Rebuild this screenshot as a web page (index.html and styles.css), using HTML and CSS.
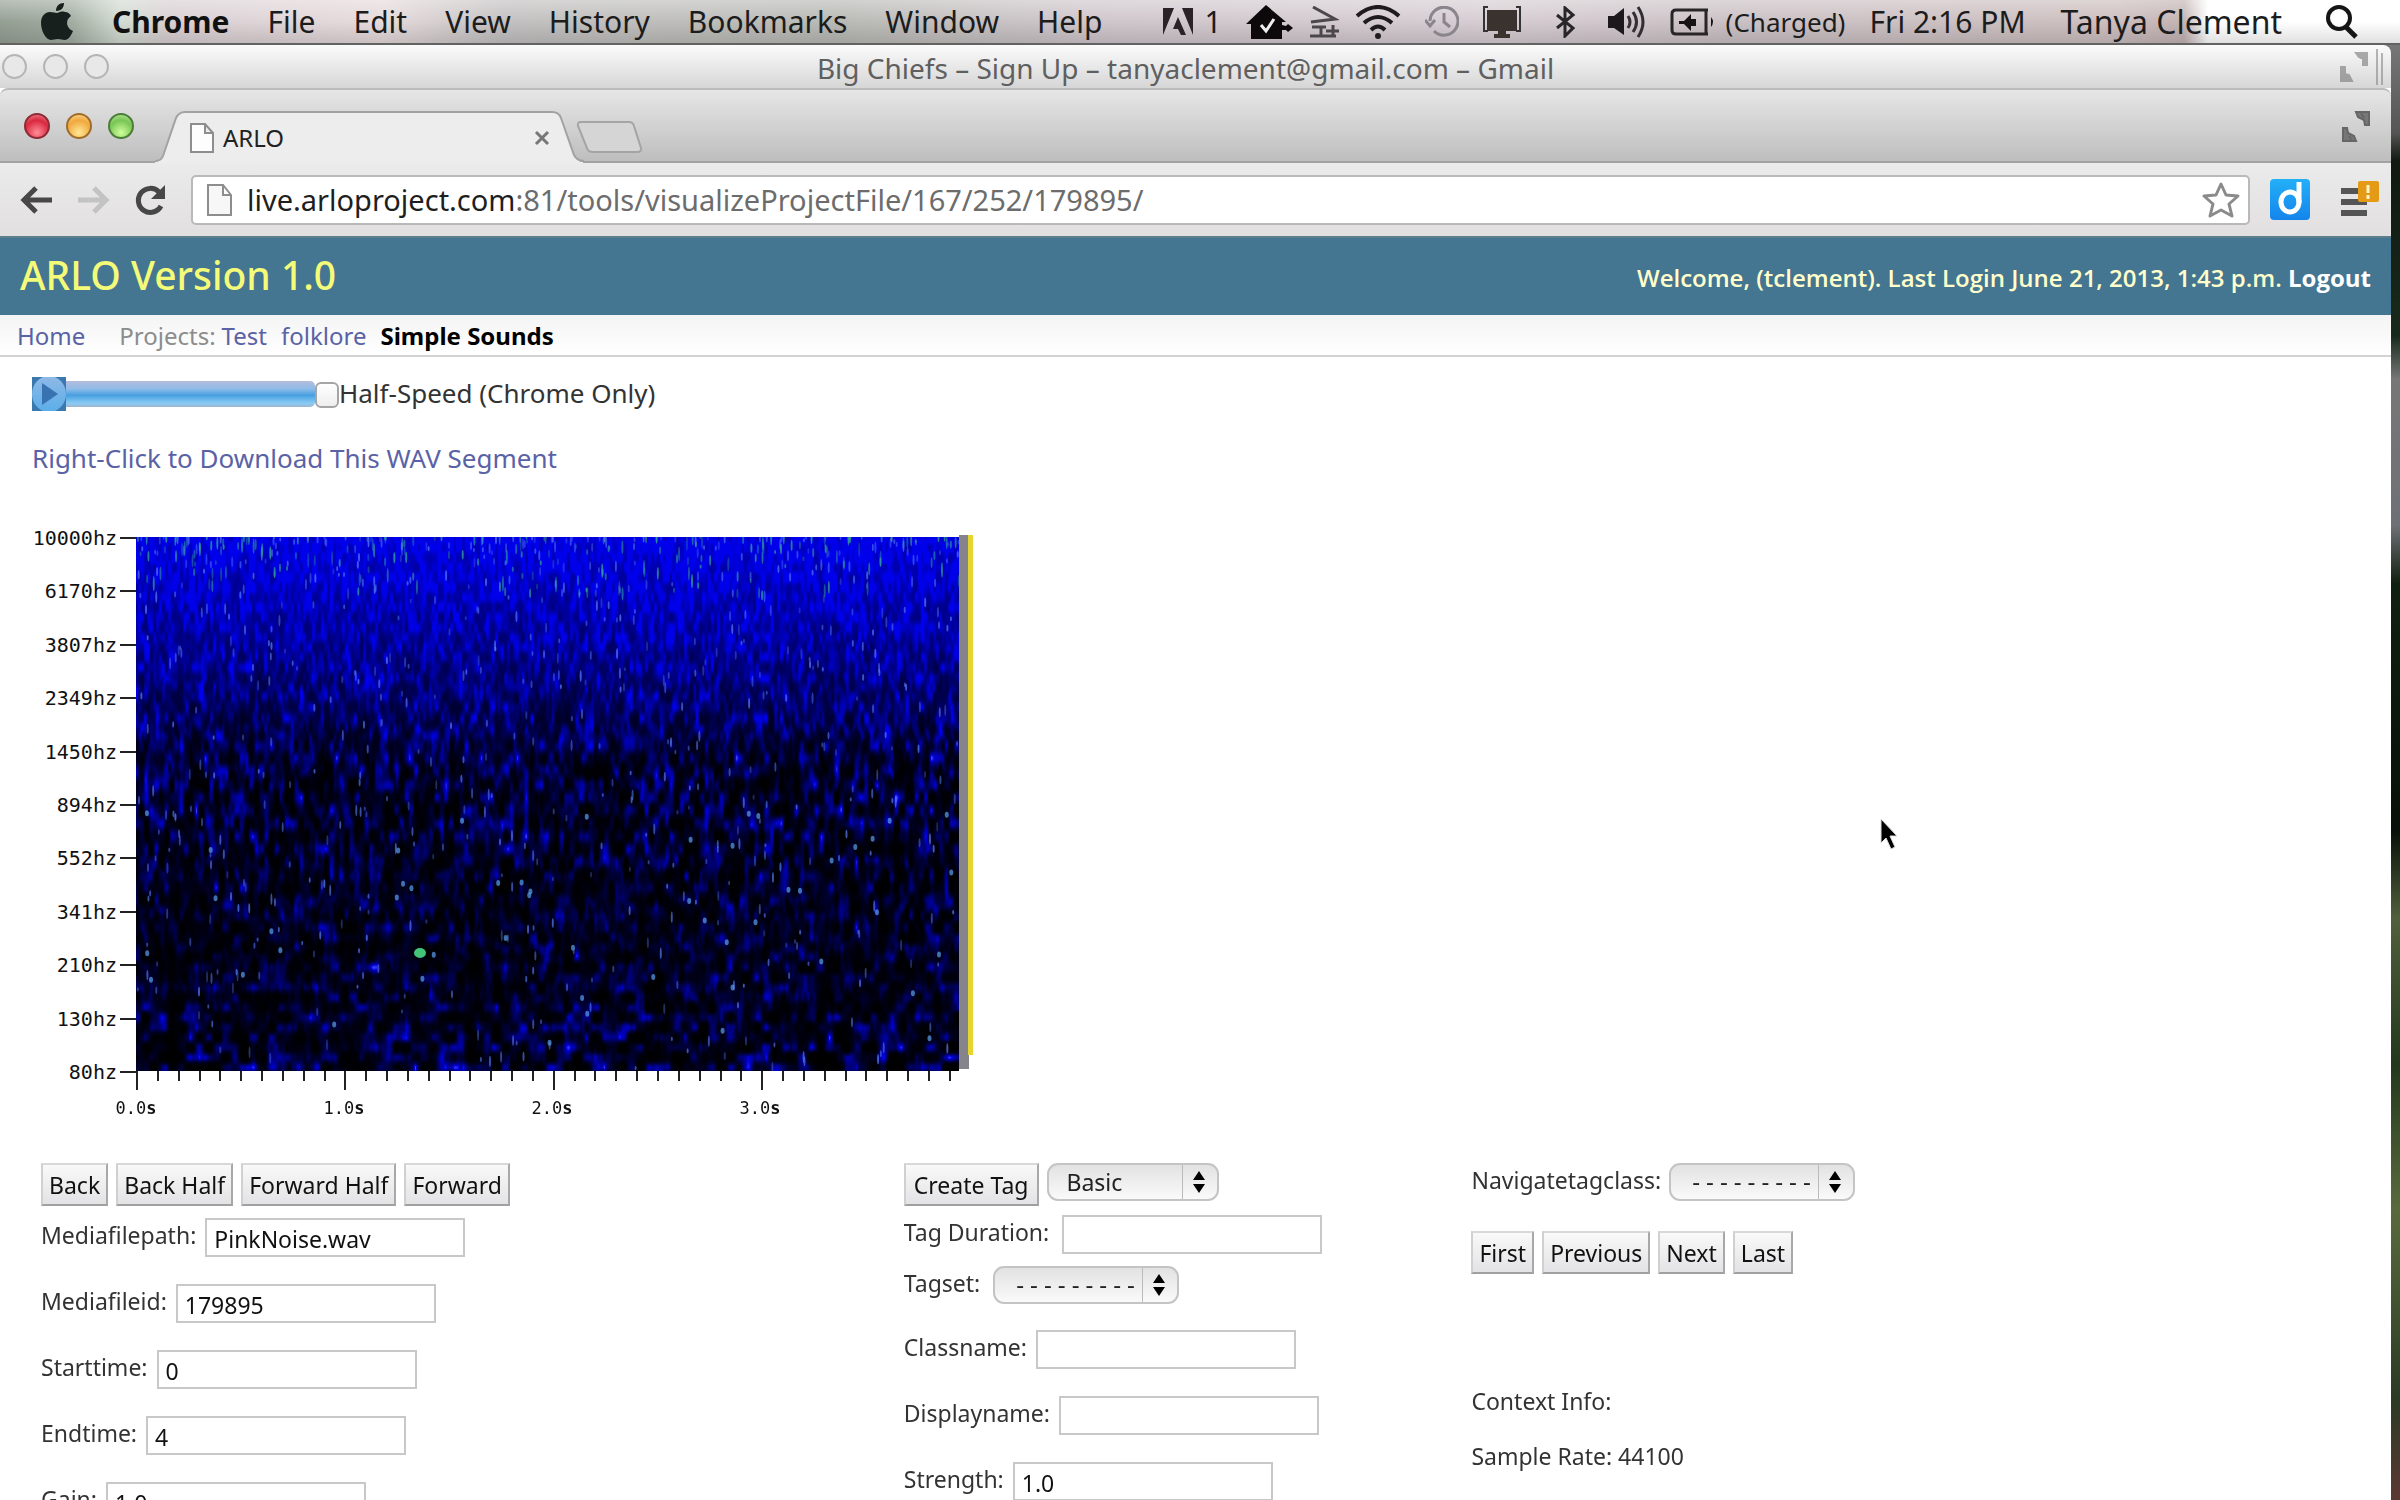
FILE: index.html
```html
<!DOCTYPE html>
<html lang="en">
<head>
<meta charset="utf-8">
<title>ARLO</title>
<link rel="stylesheet" href="styles.css">
</head>
<body>
<header class="menubar">
  <nav class="menus">
    <svg class="apple" width="34" height="38" viewBox="0 0 34 38"><path d="M17 10c3-1 5-2 8-1 3 0 5 2 6 4-6 4-5 12 2 15-2 5-5 9-8 9-3 0-4-1-7-1s-5 1-7 1C6 37 1 28 1 20 1 13 5 9 10 9c3 0 5 1 7 1zM16 8c0-5 3-8 8-8 0 5-3 8-8 8z" fill="#17201c"/></svg>
    <b>Chrome</b><span>File</span><span>Edit</span><span>View</span><span>History</span><span>Bookmarks</span><span>Window</span><span>Help</span>
  </nav>
  <div class="status">
    <div class="pair">
      <svg width="30" height="27" viewBox="0 0 30 27"><path d="M0 0h11L0 27zM19 0h11v27zM15 9l8 18h-5l-3-6h-5z" fill="#2a2226"/></svg>
      <span>1</span>
    </div>
    <div class="trio">
      <svg width="48" height="34" viewBox="0 0 48 34"><path d="M20 0l20 17h-4v3l4 1 2-2 5 4-5 4-2-2h-4v9H5V19H0z" fill="#0d090b"/><path d="M15 20l5 6 8-12" fill="none" stroke="#eee" stroke-width="3"/></svg>
      <svg width="31" height="32" viewBox="0 0 31 32"><path d="M4 1l22 12-24 3M1 30h26M3 21h14M12 21v9M17 25h13M24 19v11" fill="none" stroke="#4c474a" stroke-width="3"/></svg>
      <svg width="46" height="34" viewBox="0 0 46 34"><path d="M2 11Q23-7 44 11M9 18q14-12 28 0M16 25q7-7 14 0" fill="none" stroke="#1f1a1c" stroke-width="4"/><circle cx="23" cy="31" r="3" fill="#1f1a1c"/></svg>
    </div>
    <svg width="34" height="32" viewBox="0 0 34 32"><path d="M5 15a14 14 0 1 1 4 10M0 14l5 6 5-6M19 7v9l6 5" fill="none" stroke="#89858a" stroke-width="3"/></svg>
    <svg width="38" height="32" viewBox="0 0 38 32"><path d="M5 1H1v24h4M33 1h4v24h-4" fill="none" stroke="#333" stroke-width="2"/><path d="M4 4h30v21H4zM15 25h8v3h4v4H11v-4h4z" fill="#39322f"/></svg>
    <svg width="39" height="32" viewBox="0 0 39 32"><path d="M12 9l16 13-8 8V2l8 7-16 13" fill="none" stroke="#29262a" stroke-width="3"/></svg>
    <svg width="38" height="34" viewBox="0 0 38 34"><path d="M0 11h6l10-8v27L6 23H0z" fill="#1c181b"/><path d="M20 11q4 6 0 12M25 7q7 10 0 20M30 2q10 15 0 30" fill="none" stroke="#332e32" stroke-width="3"/></svg>
    <div class="battery">
      <svg width="45" height="28" viewBox="0 0 45 28"><path d="M38 2H6Q2 2 2 6v16q0 4 4 4h32M36 2v24" fill="none" stroke="#292427" stroke-width="3"/><path d="M41 9q4 5 0 10zM9 13h5l7-7v5h5v7h-5v5l-7-7H9z" fill="#171315"/></svg>
      <span class="charge">(Charged)</span>
    </div>
    <span class="clock">Fri 2:16 PM</span>
    <span class="user">Tanya Clement</span>
    <svg class="search" width="32" height="34" viewBox="0 0 32 34"><circle cx="13" cy="13" r="11" fill="none" stroke="#151515" stroke-width="4"/><path d="M20 22l10 10" stroke="#151515" stroke-width="5"/></svg>
  </div>
</header>

<div class="desktop">
  <div class="back-window">
    <span class="ghosts"><i></i><i></i><i></i></span>
    <span class="back-title">Big Chiefs – Sign Up – tanyaclement@gmail.com – Gmail</span>
    <svg class="resize faded" width="50" height="36" viewBox="0 0 50 36"><path d="M17 4h11v12h-4V9l-4-1zM22 4v6M2 18v14h11l-3-6-4-1v-7z" fill="#777" stroke="#777" stroke-width="2"/><path d="M38 0v36M43 4v32" stroke="#888" stroke-width="2"/></svg>
  </div>

  <div class="browser">
    <div class="tabstrip">
      <span class="lights"><i class="red"></i><i class="amber"></i><i class="green"></i></span>
      <div class="tab">
        <svg class="tab-shape" width="430" height="53" viewBox="0 0 430 53"><path d="M0 52Q6 51 8 46L21 8q3-6 9-6h367q7 0 9 6l13 37q3 7 9 7v1H0z" fill="#ededed"/><path d="M0 51q6 0 8-5L21 8q3-6 9-6h367q7 0 9 6l13 37q3 6 10 6" fill="none" stroke="#a2a2a2" stroke-width="2"/></svg>
        <div class="tab-body">
          <svg width="24" height="30" viewBox="0 0 24 30"><path d="M1 1h14l8 9v19H1zM15 1v9h8" fill="#fdfdfd" stroke="#8d8d8d" stroke-width="2"/></svg>
          <span>ARLO</span>
          <button class="tab-close" aria-label="Close tab"><svg width="16" height="16" viewBox="0 0 16 16"><path d="M2 2l12 12M14 2L2 14" stroke="#777" stroke-width="3"/></svg></button>
        </div>
      </div>
      <button class="new-tab" aria-label="New tab"><svg width="68" height="34" viewBox="0 0 68 34"><path d="M5 2h48q4 0 5 4l7 22q1 4-4 4H17q-5 0-6-4L2 6q-1-4 3-4z" fill="#d5d5d5" stroke="#a4a4a4" stroke-width="2"/></svg></button>
      <svg class="resize" width="30" height="36" viewBox="0 0 30 36"><path d="M15 4h13v13h-4l-1-5-6-3zM20 5l3 5M2 20v13h13l-2-5-6-3-1-5zM8 28l3 4" fill="#777" stroke="#666" stroke-width="2"/></svg>
    </div>
    <div class="toolbar">
      <button aria-label="Back"><svg width="33" height="28" viewBox="0 0 33 28"><path d="M3 14h29M16 2L4 14l12 12" fill="none" stroke="#474747" stroke-width="5"/></svg></button>
      <button aria-label="Forward"><svg width="33" height="28" viewBox="0 0 33 28"><path d="M1 14h29M17 2l12 12-12 12" fill="none" stroke="#c3c3c3" stroke-width="5"/></svg></button>
      <button aria-label="Reload"><svg width="33" height="32" viewBox="0 0 33 32"><path d="M27 22a12 12 0 1 1-2-14" fill="none" stroke="#474747" stroke-width="5"/><path d="M31 1v14H17z" fill="#474747"/></svg></button>
      <div class="omnibox">
        <svg width="25" height="32" viewBox="0 0 25 32"><path d="M1 1h15l8 10v20H1zM16 1v10h8" fill="#f7f7f7" stroke="#8d8d8d" stroke-width="2"/></svg>
        <span class="url"><b>live.arloproject.com</b>:81/tools/visualizeProjectFile/167/252/179895/</span>
        <svg width="38" height="38" viewBox="0 0 38 38"><path d="M19 3l5 11 12 1-9 8 3 12-11-6-11 6 3-12-9-8 12-1z" fill="none" stroke="#8b8b8b" stroke-width="3" stroke-linejoin="round"/></svg>
      </div>
      <svg width="40" height="42" viewBox="0 0 40 42"><defs><linearGradient id="dg" x2="0" y2="1"><stop stop-color="#23b0f7"/><stop offset="1" stop-color="#1484ec"/></linearGradient></defs><rect width="40" height="41" rx="4" fill="url(#dg)"/><ellipse cx="20" cy="23" rx="9" ry="10" fill="none" stroke="#fff" stroke-width="5"/><path d="M29 3v21" stroke="#fff" stroke-width="5"/></svg>
      <button class="menu-button" aria-label="Menu"><svg width="40" height="42" viewBox="0 0 40 42"><path d="M2 12h26M2 23h26M2 34h26" stroke="#555" stroke-width="6"/><rect x="19" y="2" width="21" height="21" rx="2" fill="#e59a16"/><path d="M29 6v8M29 16v4" stroke="#fff3c8" stroke-width="3"/></svg></button>
    </div>

    <div class="site-header">
      <h1>ARLO Version 1.0</h1>
      <p>Welcome, (tclement). Last Login June 21, 2013, 1:43 p.m. <a href="#logout">Logout</a></p>
    </div>
    <nav class="site-nav">
      <a class="home" href="#home">Home</a>
      <span>Projects:</span>
      <a href="#test">Test</a>
      <a class="folk" href="#folklore">folklore</a>
      <b>Simple Sounds</b>
    </nav>

    <main>
      <div class="player">
        <button class="play" aria-label="Play"><svg width="34" height="34" viewBox="0 0 34 34"><defs><linearGradient id="pg" x2="0" y2="1"><stop stop-color="#8fb9e6"/><stop offset="1" stop-color="#5aaeea"/></linearGradient></defs><rect width="34" height="34" fill="#3a79ad"/><ellipse cx="17" cy="17" rx="17" ry="18" fill="url(#pg)"/><path d="M10 6l16 11-16 11z" fill="#3872b0"/></svg></button>
        <div class="track"></div>
        <input type="checkbox" id="half"><label for="half">Half-Speed (Chrome Only)</label>
      </div>
      <a class="download" href="#wav">Right-Click to Download This WAV Segment</a>

      <figure class="chart">
        <ul class="y-axis"><li>10000hz</li><li>6170hz</li><li>3807hz</li><li>2349hz</li><li>1450hz</li><li>894hz</li><li>552hz</li><li>341hz</li><li>210hz</li><li>130hz</li><li>80hz</li></ul>
        <div class="plot">
          <canvas id="spectrum" width="823" height="534"></canvas>
          <svg id="ticks" width="823" height="20"></svg>
          <ul class="x-axis"><li>0.0<b>s</b></li><li>1.0<b>s</b></li><li>2.0<b>s</b></li><li>3.0<b>s</b></li></ul>
        </div>
        <div class="playhead"></div>
      </figure>

      <form class="panels">
        <section>
          <div class="row"><button type="button">Back</button><button type="button">Back Half</button><button type="button">Forward Half</button><button type="button">Forward</button></div>
          <div class="fields">
            <div class="field"><label for="path">Mediafilepath:</label><input id="path" value="PinkNoise.wav"></div>
            <div class="field"><label for="fid">Mediafileid:</label><input id="fid" value="179895"></div>
            <div class="field"><label for="st">Starttime:</label><input id="st" value="0"></div>
            <div class="field"><label for="et">Endtime:</label><input id="et" value="4"></div>
            <div class="field"><label for="gain">Gain:</label><input id="gain" value="1.0"></div>
          </div>
        </section>
        <section>
          <div class="row tag-row"><button type="button">Create Tag</button><span class="select short"><select aria-label="Tag mode"><option>Basic</option></select><svg width="14" height="22" viewBox="0 0 14 22"><path d="M7 0l6 9H1zM7 22l6-9H1z"/></svg></span></div>
          <div class="tag-fields">
            <div class="field"><label for="dur">Tag Duration:</label><input id="dur"></div>
            <div class="field"><label for="set">Tagset:</label><span class="select"><select class="blank" id="set"><option>---------</option></select><svg width="14" height="22" viewBox="0 0 14 22"><path d="M7 0l6 9H1zM7 22l6-9H1z"/></svg></span></div>
          </div>
          <div class="fields">
            <div class="field"><label for="cls">Classname:</label><input id="cls"></div>
            <div class="field"><label for="dis">Displayname:</label><input id="dis"></div>
            <div class="field"><label for="str">Strength:</label><input id="str" value="1.0"></div>
          </div>
        </section>
        <section>
          <div class="row"><label for="nav">Navigatetagclass:</label><span class="select"><select class="blank" id="nav"><option>---------</option></select><svg width="14" height="22" viewBox="0 0 14 22"><path d="M7 0l6 9H1zM7 22l6-9H1z"/></svg></span></div>
          <div class="row pager"><button type="button">First</button><button type="button">Previous</button><button type="button">Next</button><button type="button">Last</button></div>
          <div class="context"><p>Context Info:</p><p>Sample Rate: 44100</p></div>
        </section>
      </form>
    </main>
  </div>
</div>
<svg class="cursor" width="20" height="34" viewBox="0 0 20 34"><path d="M2 2v24l5-5 5 11 4-2-5-11h7z" fill="#000" stroke="#ddd" stroke-width="1"/></svg>
<script src="spectrum.js"></script>
</body>
</html>
```
FILE: styles.css
```css
* { box-sizing: border-box; }
body { margin: 0; height: 100vh; overflow: hidden; display: flex; flex-direction: column; position: relative; font-family: "Noto Sans", "Open Sans", sans-serif; font-size: 23px; color: #333; background: #fff; }
ul, p, h1, figure { margin: 0; padding: 0; list-style: none; font-weight: normal; }
button { font: inherit; padding: 0; border: 0; background: none; }
svg { display: block; flex: none; }
a { color: #5a62a6; text-decoration: none; }

.menubar { flex: none; height: 45px; padding: 0 42px 0 40px; display: flex; justify-content: space-between; align-items: center; white-space: nowrap; font-size: 30px; line-height: 40px; color: #1c1c1c; border-bottom: 2px solid #626262;
  background: linear-gradient(rgba(255,255,255,.35), rgba(255,255,255,0) 50%, rgba(0,0,0,.12)), linear-gradient(90deg, #95a095 0, #a3aea3 3%, #d3dcd2 5%, #d9d0d3 7%, #e6dadc 16%, #c3c1c1 21%, #b9bab5 35%, #cfc6cb 45%, #d6cdd2 62%, #cbc1c5 72%, #cdbfbf 88%, #c4b4b4 91%, #fff 92%); }
.menus { display: flex; align-items: center; gap: 38px; }
.menus b { color: #111; }
.status { display: flex; align-items: center; gap: 24px; }
.pair, .battery { display: flex; align-items: center; gap: 11px; }
.trio { display: flex; align-items: center; gap: 15px; }
.charge { font-size: 26px; }
.user { margin-left: 11px; font-size: 32px; }
.search { margin-left: 20px; }

.desktop { flex: 1; min-height: 0; padding-right: 9px; background: linear-gradient(#777 0, #555 6%, #101810 8%, #182a1c 20%, #777 23%, #6f7076 33%, #102010 37%, #071008 54%, #51603c 60%, #23381c 70%, #596b3d 80%, #2b3a24 93%, #5b3833 100%); }
.back-window { height: 43px; display: grid; grid-template-columns: 1fr auto 1fr; align-items: center; padding: 0 2px; background: linear-gradient(#fbfbfb, #d6d6d6); border-radius: 0 8px 0 0; }
.ghosts, .lights { display: flex; gap: 16px; }
.ghosts i { width: 25px; height: 25px; border: 2px solid #b5b5b5; border-radius: 50%; background: #e8e8e8; }
.back-title { padding: 2px 20px 0 0; font-size: 28px; line-height: 40px; color: #5f5f5f; }
.resize { margin-left: auto; }
.faded { opacity: .6; }

.browser { min-height: 100%; background: #fff; }
.tabstrip { height: 75px; padding: 0 20px 0 24px; display: flex; align-items: center; border-top: 2px solid #bbb; border-bottom: 2px solid #a2a2a2; border-radius: 8px 8px 0 0; background: linear-gradient(#e6e6e6, #bebebe); }
.lights i { width: 26px; height: 26px; border-radius: 50%; border: 2px solid #7a5a50; }
.lights .red { border-color: #8e2a35; background: radial-gradient(circle at 50% 80%, #ff8c96, #d9283f 60%, #f08f98); }
.lights .amber { border-color: #a06c2a; background: radial-gradient(circle at 50% 80%, #ffe896, #f0a83d 60%, #fce0a0); }
.lights .green { border-color: #4b7d38; background: radial-gradient(circle at 50% 80%, #d0ff9c, #77c552 60%, #c2eba8); }
.tab { position: relative; width: 430px; height: 53px; margin: 0 -9px -2px 21px; align-self: flex-end; }
.tab-shape { position: absolute; inset: 0; }
.tab-body { position: relative; display: flex; align-items: center; gap: 9px; height: 53px; padding: 2px 35px 0 35px; font-size: 24px; color: #222; }
.tab-close { margin-left: auto; }
.new-tab { margin-top: 22px; }
.toolbar { height: 73px; display: flex; align-items: center; gap: 24px; padding: 0 12px 0 20px; background: linear-gradient(#ebebeb, #e2dfe0); }
.toolbar button { width: 33px; flex: none; }
.omnibox { flex: 1; height: 50px; display: flex; align-items: center; gap: 15px; padding: 0 8px 0 14px; background: #fff; border: 2px solid #b9b9b9; border-radius: 5px; margin-right: -4px; }
.url { flex: 1; font-size: 29px; line-height: 40px; color: #6c6c6c; }
.url b { font-weight: normal; color: #1e1e1e; }
.toolbar .menu-button { width: 40px; margin-left: 5px; }

.site-header { height: 79px; padding: 0 20px 4px; display: flex; align-items: center; justify-content: space-between; background: #447591; border-top: 2px solid #5c7f8b; color: #ffffcc; }
h1 { font-size: 39px; font-weight: 500; line-height: 52px; color: #f3fb78; }
.site-header p { font: 600 24px/32px "Open Sans", "Noto Sans", sans-serif; padding-top: 6px; }
.site-header a { color: #fff; font-weight: 700; }
.site-nav { height: 42px; padding: 0 17px; display: flex; align-items: center; font-size: 24px; color: #8c8c8c; background: linear-gradient(#f4f4f4, #fff); border-bottom: 2px solid #d2d2d2; }
.home { margin-right: 34px; }
.site-nav span { margin-right: 6px; }
.folk { margin: 0 14px; }
.site-nav b { color: #000; }

main { padding: 20px 0 0 32px; }
.player { display: flex; align-items: center; font-size: 26px; line-height: 32px; }
.player label { padding-bottom: 2px; }
.track { width: 249px; height: 26px; border-radius: 0 5px 5px 0; background: linear-gradient(#b5bcdc, #8fbce8 30%, #479fe0 55%, #8acbf5 85%, #9db6d0); }
.player input { appearance: none; width: 24px; height: 26px; margin: 2px 0 0; border: 2px solid #a5a5a5; border-radius: 6px; background: linear-gradient(#fff, #eee); }
.download { display: block; margin-top: 27px; font-size: 26px; line-height: 40px; }

.chart { display: flex; margin-top: 59px; font-family: "DejaVu Sans Mono", monospace; color: #111; }
.y-axis { width: 104px; height: 554px; margin-top: -9px; display: flex; flex-direction: column; justify-content: space-between; font-size: 20px; line-height: 20px; }
.y-axis li { display: flex; align-items: center; justify-content: flex-end; gap: 3px; }
.y-axis li::after { content: ""; width: 16px; height: 2px; background: #222; }
#spectrum { display: block; background: #000; }
.x-axis { display: flex; margin-left: -104px; font-size: 17px; line-height: 34px; }
.x-axis li { width: 208px; text-align: center; }
.playhead { width: 14px; height: 534px; margin-top: -2px; background: linear-gradient(#e6d52e, #e6d52e) right top / 5px 520px no-repeat, linear-gradient(#84848a, #84848a) left / 10px 100% no-repeat; }

.panels { display: grid; grid-template-columns: 76fr 50fr 81fr; margin: 38px 0 0 9px; }
.row { display: flex; gap: 8px; }
.row button { height: 43px; padding: 0 6px; color: #111; border: 2px solid; border-color: #d8d8d8 #a8a8a8 #a0a0a0 #d0d0d0; background: linear-gradient(#f9f9f9, #e3e3e5); }
.tag-row button { padding: 0 8px; }
.fields { display: flex; flex-direction: column; gap: 27px; margin-top: 12px; }
.field { display: flex; gap: 9px; }
.panels label { line-height: 34px; }
.field input { width: 260px; height: 39px; padding: 2px 7px 0; border: 2px solid #c8c8c8; background: #fff; font: inherit; color: #111; }
.tag-fields { display: flex; flex-direction: column; gap: 12px; margin: 9px 0 26px; }
.tag-fields .field { gap: 13px; }
.tag-fields + .fields { margin-top: 0; }
.select { position: relative; width: 186px; height: 38px; }
.short { width: 172px; }
.select select { appearance: none; width: 100%; height: 100%; padding: 0 18px; font: inherit; line-height: 32px; color: #222; border: 2px solid #c4c4c4; border-radius: 11px; background: linear-gradient(#bbb, #bbb) right 34px top / 1px 100% no-repeat, linear-gradient(#e2e2e2, #fafafa); }
.select .blank { font-family: "DejaVu Sans Mono", monospace; }
.select svg { position: absolute; right: 13px; top: 8px; }
.pager { margin-top: 30px; }
.context { margin-top: 107px; }
.context p { line-height: 40px; margin-bottom: 15px; }

.cursor { position: absolute; left: 78.3%; top: 817px; }
```
FILE: spectrum.js
```javascript
// Pink-noise spectrogram: dense at the top, sparse blobs at the bottom.
const canvas = document.getElementById('spectrum');
const ctx = canvas.getContext('2d');
const W = canvas.width, H = canvas.height;
let seed = 7;
function rand() {
  seed = (seed * 1664525 + 1013904223) >>> 0;
  return seed / 4294967296;
}
function makeNoise(cw, ch) {
  const cols = Math.ceil(W / cw) + 2, rows = Math.ceil(H / ch) + 2;
  const grid = Array.from({ length: cols * rows }, rand);
  const ease = v => v * v * (3 - 2 * v);
  return (x, y) => {
    const gx = Math.floor(x / cw), gy = Math.floor(y / ch);
    const fx = ease(x / cw - gx), fy = ease(y / ch - gy);
    const i = gy * cols + gx;
    return (grid[i] * (1 - fx) + grid[i + 1] * fx) * (1 - fy) +
      (grid[i + cols] * (1 - fx) + grid[i + cols + 1] * fx) * fy;
  };
}
const fine = makeNoise(3, 10), mid = makeNoise(5, 13), coarse = makeNoise(9, 10);
const image = ctx.createImageData(W, H);
for (let y = 0; y < H; y++) {
  const t = y / H;
  for (let x = 0; x < W; x++) {
    const low = t < 0.5 ? fine(x, y) * (1 - 2 * t) + mid(x, y) * 2 * t
      : mid(x, y) * (2 - 2 * t) + coarse(x, y) * (2 * t - 1);
    const n = low * 0.8 + fine(x, y) * 0.2;
    const v = Math.max(0, 0.72 - t * 1.7) + Math.pow(n, 1.2 + Math.min(1, t * 1.5) * 2.2) * (0.5 + Math.min(1, t * 2) * 0.8);
    const k = (y * W + x) * 4;
    image.data[k] = image.data[k + 1] = t > 0.4 ? Math.max(0, v - 0.85) * 300 : 0;
    image.data[k + 2] = Math.min(235, v * 255);
    image.data[k + 3] = 255;
  }
}
ctx.putImageData(image, 0, 0);
function speck(x, y, w, h, color) {
  ctx.fillStyle = color;
  ctx.beginPath();
  ctx.ellipse(x, y, w, h, 0, 0, Math.PI * 2);
  ctx.fill();
}
for (let i = 0; i < 620; i++) {
  speck(rand() * W, Math.pow(rand(), 1.8) * H, 1, 2 + rand() * 4, `rgba(90,130,255,${0.3 + rand() * 0.4})`);
}
for (let i = 0; i < 200; i++) {
  speck(rand() * W, Math.pow(rand(), 2) * 60, 1, 2 + rand() * 6, `rgba(50,160,150,${0.3 + rand() * 0.5})`);
}
for (let i = 0; i < 50; i++) {
  speck(rand() * W, H * (0.5 + rand() * 0.45), 2, 3, 'rgba(90,160,240,0.7)');
}
speck(284, 416, 6, 5, '#43c478');

// Time ruler: ten marks to the second.
const ruler = document.getElementById('ticks');
let d = '';
for (let i = 0; i * 20.84 < W; i++) d += `M${Math.round(i * 20.84) + 1} 0v${i % 10 ? 10 : 19}`;
ruler.innerHTML = `<path d="${d}" stroke="#222" stroke-width="2"/>`;
```
